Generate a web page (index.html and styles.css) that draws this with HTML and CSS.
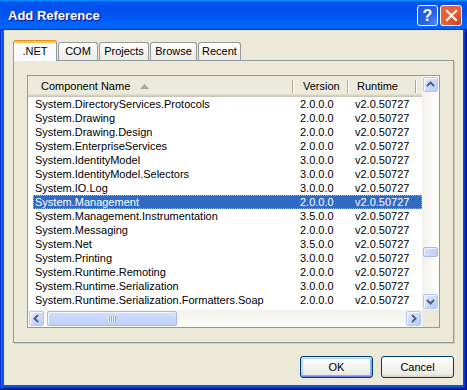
FILE: index.html
```html
<!DOCTYPE html>
<html>
<head>
<meta charset="utf-8">
<link rel="stylesheet" href="styles.css">
</head>
<body>
<div class="window">
  <div class="titlebar">
    <span class="title">Add Reference</span>
    <span class="tb-btn help">?</span>
    <span class="tb-btn close"><svg width="13" height="13" viewBox="0 0 13 13"><path d="M2 2 L11 11 M11 2 L2 11" stroke="#fff" stroke-width="2.2" stroke-linecap="square" fill="none"/></svg></span>
  </div>
  <div class="frame">
    <div class="client">
      <div class="tabs">
        <div class="tab active t-net">.NET</div>
        <div class="tab t-com">COM</div>
        <div class="tab t-proj">Projects</div>
        <div class="tab t-browse">Browse</div>
        <div class="tab t-recent">Recent</div>
      </div>
      <div class="panel">
        <div class="list">
          <div class="list-main">
            <div class="header">
              <div class="hcell hname">Component Name<svg class="sort" width="9" height="5" viewBox="0 0 9 5"><path d="M4.5 0 L9 5 L0 5 Z" fill="#ACA899"/></svg></div>
              <div class="hcell hver">Version</div>
              <div class="hcell hrun">Runtime</div>
              <div class="hcell hrest"></div>
            </div>
            <div class="rows">
              <div class="row"><span>System.DirectoryServices.Protocols</span><span>2.0.0.0</span><span>v2.0.50727</span></div>
              <div class="row"><span>System.Drawing</span><span>2.0.0.0</span><span>v2.0.50727</span></div>
              <div class="row"><span>System.Drawing.Design</span><span>2.0.0.0</span><span>v2.0.50727</span></div>
              <div class="row"><span>System.EnterpriseServices</span><span>2.0.0.0</span><span>v2.0.50727</span></div>
              <div class="row"><span>System.IdentityModel</span><span>3.0.0.0</span><span>v2.0.50727</span></div>
              <div class="row"><span>System.IdentityModel.Selectors</span><span>3.0.0.0</span><span>v2.0.50727</span></div>
              <div class="row"><span>System.IO.Log</span><span>3.0.0.0</span><span>v2.0.50727</span></div>
              <div class="row selected"><span>System.Management</span><span>2.0.0.0</span><span>v2.0.50727</span></div>
              <div class="row"><span>System.Management.Instrumentation</span><span>3.5.0.0</span><span>v2.0.50727</span></div>
              <div class="row"><span>System.Messaging</span><span>2.0.0.0</span><span>v2.0.50727</span></div>
              <div class="row"><span>System.Net</span><span>3.5.0.0</span><span>v2.0.50727</span></div>
              <div class="row"><span>System.Printing</span><span>3.0.0.0</span><span>v2.0.50727</span></div>
              <div class="row"><span>System.Runtime.Remoting</span><span>2.0.0.0</span><span>v2.0.50727</span></div>
              <div class="row"><span>System.Runtime.Serialization</span><span>3.0.0.0</span><span>v2.0.50727</span></div>
              <div class="row"><span>System.Runtime.Serialization.Formatters.Soap</span><span>2.0.0.0</span><span>v2.0.50727</span></div>
            </div>
          </div>
          <div class="vscroll">
            <div class="sbtn"><svg width="13" height="13" viewBox="0 0 13 13"><path d="M3 8 L6.5 4.5 L10 8" stroke="#4D6185" stroke-width="2" fill="none"/></svg></div>
            <div class="vtrack"><div class="vthumb"></div></div>
            <div class="sbtn"><svg width="13" height="13" viewBox="0 0 13 13"><path d="M3 5 L6.5 8.5 L10 5" stroke="#4D6185" stroke-width="2" fill="none"/></svg></div>
          </div>
          <div class="hscroll">
            <div class="sbtn"><svg width="13" height="13" viewBox="0 0 13 13"><path d="M8 3 L4.5 6.5 L8 10" stroke="#4D6185" stroke-width="2" fill="none"/></svg></div>
            <div class="htrack"><div class="hthumb"><span class="grip"></span></div></div>
            <div class="sbtn"><svg width="13" height="13" viewBox="0 0 13 13"><path d="M5 3 L8.5 6.5 L5 10" stroke="#4D6185" stroke-width="2" fill="none"/></svg></div>
          </div>
          <div class="corner"></div>
        </div>
      </div>
      <div class="actions">
        <button class="btn default">OK</button>
        <button class="btn">Cancel</button>
      </div>
    </div>
  </div>
</div>
</body>
</html>
```
FILE: styles.css
```css
* { box-sizing: border-box; }

body {
  margin: 0;
  font-family: "Liberation Sans", Arial, sans-serif;
  font-size: 11px;
  color: #000;
  background: #ECE9D8;
}

.window {
  width: 467px;
  height: 390px;
  display: flex;
  flex-direction: column;
  overflow: hidden;
  background: #0054E3;
}

.titlebar {
  height: 30px;
  flex: none;
  display: flex;
  align-items: center;
  padding: 0 5px 0 8px;
  background: linear-gradient(180deg, #0997FF, #0053EE 8%, #0050EE 40%, #0066FF 88%, #0066FF 93%, #005BFF 95%, #003DD7 96%, #003DD7);
}

.title {
  flex: 1;
  color: #fff;
  font-family: "Liberation Sans", Arial, sans-serif;
  font-weight: bold;
  font-size: 13px;
  text-shadow: 1px 1px #0F1089;
  padding-top: 1px;
}

.tb-btn {
  width: 21px;
  height: 21px;
  border: 1px solid #fff;
  border-radius: 3px;
  display: flex;
  align-items: center;
  justify-content: center;
  color: #fff;
  margin-top: 1px;
}

.help {
  background: radial-gradient(circle at 90% 90%, #4A86F6 0, #2A63E4 40%, #1F55DA 100%);
  font-family: "Liberation Sans", Arial, sans-serif;
  font-weight: bold;
  font-size: 16px;
  line-height: 19px;
  margin-right: 2px;
}

.close {
  width: 22px;
  background: radial-gradient(circle at 90% 90%, #CC4628 0, #E35C35 45%, #E5683E 100%);
}

.frame {
  flex: 1;
  display: flex;
  padding: 0 4px 5px 4px;
  background: #0855DD;
  box-shadow: inset -1px -1px #00138C, inset 1px 1px #0831D9, inset -2px -2px #001EA0, inset 2px 2px #166AEE, inset -3px -3px #003BDA, inset 3px 3px #0855DD;
}

.client {
  flex: 1;
  display: flex;
  flex-direction: column;
  background: #ECE9D8;
  padding: 10px 9px 7px 9px;
}

/* Tabs */
.tabs {
  display: flex;
  align-items: flex-end;
  height: 20px;
  flex: none;
}

.tab {
  height: 18px;
  line-height: 17px;
  text-align: center;
  margin-right: 1px;
  border: 1px solid #919B9C;
  border-bottom: none;
  border-radius: 3px 3px 0 0;
  background: linear-gradient(#FFFFFF, #F3F2EC 60%, #ECEBE5);
}

.tab.active {
  height: 21px;
  margin-bottom: -1px;
  position: relative;
  z-index: 1;
  border-top: none;
  line-height: 17px;
  padding-top: 3px;
  background: linear-gradient(#E68B2C 0, #E68B2C 1px, #FFC73C 1px, #FFC73C 3px, #FCFCFE 3px);
}

.t-net { width: 44px; }
.t-com { width: 40px; }
.t-proj { width: 50px; }
.t-browse { width: 47px; }
.t-recent { width: 43px; }

.panel {
  height: 283px;
  flex: none;
  border: 1px solid #919B9C;
  box-shadow: 1px 1px #D0CEBF;
  padding: 14px 13px;
  background: #ECE9D8;
}

/* List view */
.list {
  width: 413px;
  height: 253px;
  border: 1px solid #7F9DB9;
  background: #fff;
  display: grid;
  grid-template-columns: 394px 17px;
  grid-template-rows: 234px 17px;
}

.list-main {
  overflow: hidden;
}

.header {
  display: grid;
  grid-template-columns: 266px 55px 68px 1fr;
  height: 21px;
  background: #EBEADB;
  box-shadow: inset 0 -1px #CBC7B8, inset 0 -2px #D6D2C2, inset 0 -3px #E2DECD;
}

.hcell {
  position: relative;
  padding-top: 3px;
  line-height: 15px;
  white-space: nowrap;
  display: flex;
  align-items: flex-start;
}

.hcell::after {
  content: "";
  position: absolute;
  right: 0;
  top: 4px;
  height: 13px;
  width: 2px;
  background: linear-gradient(to right, #ACA899 0, #ACA899 1px, #FFFFFF 1px);
}

.hrest::after { display: none; }

.hname { padding-left: 13px; }
.hver { padding-left: 9px; }
.hrun { padding-left: 8px; }

.sort {
  margin-left: 10px;
  margin-top: 5px;
}

.rows {
  padding-top: 0;
}

.row {
  display: grid;
  grid-template-columns: 261px 55px 68px 1fr;
  height: 14px;
  line-height: 14px;
  margin-left: 5px;
  white-space: nowrap;
}

.row span { padding-left: 6px; overflow: visible; }
.row span:first-child { padding-left: 2px; }

.row.selected {
  background: #316AC5;
  color: #fff;
  outline: 1px dotted #E8A447;
  outline-offset: -1px;
}

/* Scrollbars */
.sbtn {
  width: 15px;
  height: 15px;
  margin: 1px;
  flex: none;
  border: 1px solid #B4C8F6;
  border-radius: 2px;
  background: linear-gradient(135deg, #E3EBFE 0%, #CBD9FC 55%, #B8CBF8 100%);
  box-shadow: inset 1px 1px #F4F7FE;
  display: flex;
  align-items: center;
  justify-content: center;
}

.vscroll {
  display: flex;
  flex-direction: column;
  background: linear-gradient(to right, #F3F1EC, #FEFEFB);
}

.vtrack {
  flex: 1;
  padding: 0 1px;
}

.vthumb {
  margin-top: 154px;
  height: 10px;
  border: 1px solid #A6BBEC;
  border-radius: 2px;
  background: linear-gradient(to right, #D2DFFD, #BDCFFA);
  box-shadow: inset 1px 1px #EEF3FE;
}

.hscroll {
  display: flex;
  background: linear-gradient(to bottom, #F3F1EC, #FEFEFB);
}

.htrack {
  flex: 1;
  padding: 1px 0 1px 2px;
}

.hthumb {
  width: 130px;
  height: 15px;
  border: 1px solid #A6BBEC;
  border-radius: 2px;
  background: linear-gradient(to bottom, #D2DFFD, #BDCFFA);
  box-shadow: inset 1px 1px #EEF3FE;
  display: flex;
  align-items: center;
  justify-content: center;
}

.grip {
  width: 8px;
  height: 6px;
  background: repeating-linear-gradient(to right, #EEF4FE 0, #EEF4FE 1px, #8CA9E6 1px, #8CA9E6 2px);
}

.corner {
  background: #ECE9D8;
}

/* Buttons */
.actions {
  display: flex;
  justify-content: flex-end;
  gap: 8px;
  margin-top: 13px;
}

.btn {
  width: 73px;
  height: 22px;
  padding: 0;
  border: 1px solid #003C74;
  border-radius: 3px;
  background: linear-gradient(#FFFFFF 0%, #F5F4EF 45%, #ECEBE6 85%, #D6D0C5 100%);
  font-family: "Liberation Sans", Arial, sans-serif;
  font-size: 11px;
  color: #000;
  line-height: 20px;
}

.btn.default {
  box-shadow: inset 0 1px #CEE7FF, inset 0 -1px #6982EE, inset 1px 0 #BCD4F6, inset -1px 0 #89ADE4, inset 0 2px #BCD4F6, inset 0 -2px #89ADE4, inset 2px 0 #BCD4F6, inset -2px 0 #89ADE4;
}
```
